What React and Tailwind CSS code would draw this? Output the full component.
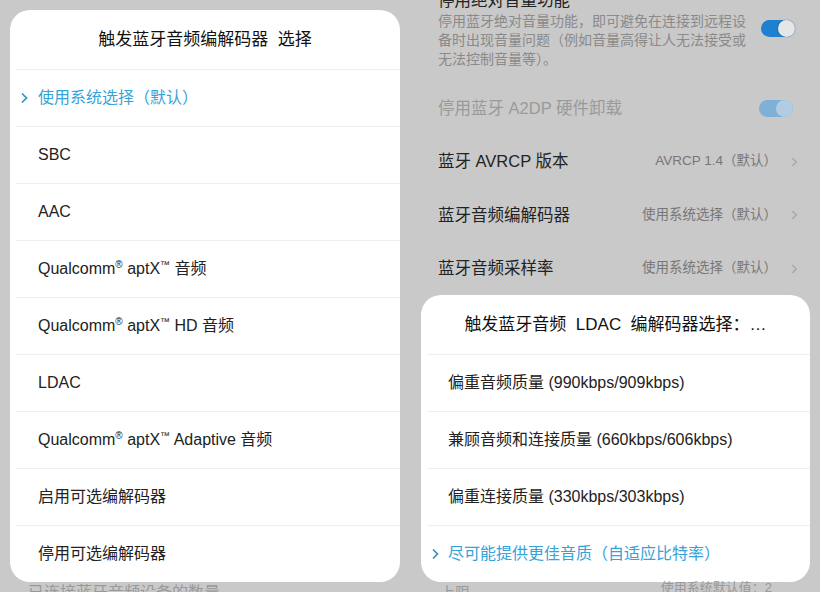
const font = { fontFamily: '"Liberation Sans", "Noto Sans CJK SC", sans-serif' };

function Chevron({ className }) {
  return (
    <svg viewBox="0 0 8 12" className={className} fill="none" stroke="currentColor" strokeWidth="1.6">
      <polyline points="1.5,1.5 6,6 1.5,10.5" />
    </svg>
  );
}

function Toggle({ disabled }) {
  return (
    <div
      className={
        "relative w-[34px] h-[17px] rounded-full " +
        (disabled ? "bg-[#7fb0d8]" : "bg-[#1f7fd0]")
      }
    >
      <div
        className={
          "absolute right-0 top-0 w-[17px] h-[17px] rounded-full " +
          (disabled ? "bg-[#b2cde3]" : "bg-[#e6e6e6] shadow-[0_0_2px_rgba(0,0,0,0.25)]")
        }
      />
    </div>
  );
}

function OptionRow({ label, selected, pad = "pl-[28px]" }) {
  return (
    <div className="relative h-[57px] shrink-0 border-t border-[#efefef] ml-[6px] flex items-center">
      {selected && <Chevron className="absolute left-[4px] w-[9px] h-[12px] text-[#2a8fc4]" />}
      <span
        className={
          pad +
          " -ml-[6px] text-[16px] " +
          (selected ? "text-[#35a2d8]" : "text-[#222]")
        }
      >
        {label}
      </span>
    </div>
  );
}

function Qc({ children }) {
  return (
    <>
      Qualcomm<sup className="text-[10px] -top-[6px]">®</sup> aptX<sup className="text-[10px] -top-[6px]">™</sup> {children}
    </>
  );
}

function SettingRow({ title, value, h }) {
  return (
    <div className={"shrink-0 flex items-center justify-between pl-[28px] pr-[22px] " + h}>
      <span className="text-[16.5px] text-[#222]">{title}</span>
      <div className="flex items-center gap-[14px]">
        <span className="text-[13.5px] text-[#777]">{value}</span>
        <Chevron className="w-[7px] h-[12px] text-[#a8a8a8]" />
      </div>
    </div>
  );
}

export default function App() {
  return (
    <div className="w-[820px] h-[592px] overflow-hidden bg-[#c9c9c9] flex" style={font}>
      {/* left screenshot */}
      <div className="w-[410px] flex flex-col pt-[10px] pl-[10px]">
        <div className="w-[390px] h-[572px] bg-white rounded-[20px] overflow-hidden flex flex-col shrink-0">
          <div className="h-[59px] shrink-0 flex items-center justify-center text-[17px] text-[#111]">
            触发蓝牙音频编解码器&nbsp;&nbsp;选择
          </div>
          <OptionRow label="使用系统选择（默认）" selected />
          <OptionRow label="SBC" />
          <OptionRow label="AAC" />
          <OptionRow label={<Qc>音频</Qc>} />
          <OptionRow label={<Qc>HD 音频</Qc>} />
          <OptionRow label="LDAC" />
          <OptionRow label={<Qc>Adaptive 音频</Qc>} />
          <OptionRow label="启用可选编解码器" />
          <OptionRow label="停用可选编解码器" />
        </div>
        <div className="shrink-0 pl-[18px] pt-[1px] text-[16px] leading-[20px] text-[#999] whitespace-nowrap">
          已连接蓝牙音频设备的数量
        </div>
      </div>

      {/* right screenshot */}
      <div className="w-[410px] flex flex-col">
        <div className="shrink-0 flex items-start justify-between pl-[28px] pr-[25px] -mt-[11px]">
          <div>
            <div className="text-[16.5px] leading-[22px] text-[#222]">停用绝对音量功能</div>
            <div className="text-[14px] leading-[19px] text-[#8a8a8a] whitespace-nowrap pt-[1px]">
              停用蓝牙绝对音量功能，即可避免在连接到远程设
              <br />
              备时出现音量问题（例如音量高得让人无法接受或
              <br />
              无法控制音量等）。
            </div>
          </div>
          <div className="mt-[31px]">
            <Toggle />
          </div>
        </div>
        <div className="h-[12px] shrink-0" />
        <div className="h-[54px] shrink-0 flex items-center justify-between pl-[28px] pr-[27px]">
          <span className="text-[16.5px] text-[#9a9a9a]">停用蓝牙 A2DP 硬件卸载</span>
          <Toggle disabled />
        </div>
        <SettingRow title="蓝牙 AVRCP 版本" value="AVRCP 1.4（默认）" h="h-[53px]" />
        <SettingRow title="蓝牙音频编解码器" value="使用系统选择（默认）" h="h-[54px]" />
        <SettingRow title="蓝牙音频采样率" value="使用系统选择（默认）" h="h-[53px]" />

        <div className="ml-[11px] w-[389px] h-[287px] bg-white rounded-[20px] overflow-hidden flex flex-col shrink-0">
          <div className="h-[59px] shrink-0 flex items-center justify-center text-[17px] text-[#111]">
            触发蓝牙音频&nbsp;&nbsp;LDAC&nbsp;&nbsp;编解码器选择：…
          </div>
          <OptionRow label="偏重音频质量 (990kbps/909kbps)" pad="pl-[27px]" />
          <OptionRow label="兼顾音频和连接质量 (660kbps/606kbps)" pad="pl-[27px]" />
          <OptionRow label="偏重连接质量 (330kbps/303kbps)" pad="pl-[27px]" />
          <OptionRow label="尽可能提供更佳音质（自适应比特率）" selected pad="pl-[27px]" />
        </div>
        <div className="shrink-0 flex justify-between pl-[30px] pr-[48px]">
          <span className="text-[15px] leading-[20px] text-[#999] mt-[1px]">上限</span>
          <span className="text-[13px] leading-[16px] text-[#999] -mt-[2px]">使用系统默认值：2</span>
        </div>
      </div>
    </div>
  );
}
